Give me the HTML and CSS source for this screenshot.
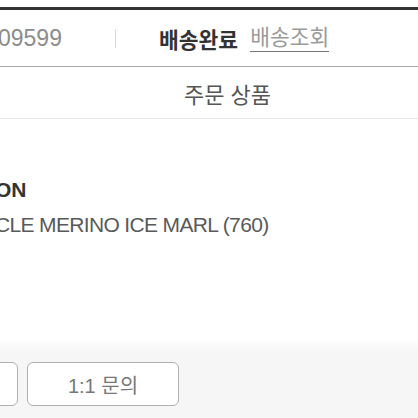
FILE: index.html
```html
<!DOCTYPE html>
<html lang="ko">
<head>
  <meta charset="UTF-8" />
  <title>주문 상세</title>
  <link rel="stylesheet" href="styles.css">
</head>
<body>

<div class="order-head">
  <div class="order-no">09599</div>
  <span class="sep"></span>
  <div class="status">
    <strong>배송완료</strong>
    <a class="track" href="#">배송조회</a>
  </div>
</div>

<div class="section-title">주문 상품</div>

<div class="product">
  <div class="brand">ON</div>
  <div class="name">CLE MERINO ICE MARL (760)</div>
</div>

<div class="actions">
  <button class="btn btn-cut"></button>
  <button class="btn">1:1 문의</button>
</div>

</body>
</html>
```

FILE: styles.css
```css
* { box-sizing: border-box; font-family: 'Liberation Sans', 'Noto Sans CJK KR', sans-serif; }
body {
  margin: 0;
  background: #fff;
  color: #333;
  overflow: hidden;
  width: 418px;
  height: 418px;
}

/* order number + delivery status */
.order-head {
  margin-top: 7px;
  border-top: 3px solid #333;
  border-bottom: 1px solid #a8a8a8;
  height: 60px;
  display: flex;
  align-items: center;
}
.order-no {
  width: 115px;
  flex-shrink: 0;
  margin-left: -2px;
  font-size: 23px;
  color: #8c8c8c;
}
.sep {
  width: 1px;
  height: 19px;
  background: #d8d8d8;
  margin-left: 2px;
}
.status {
  margin-left: 43px;
  display: flex;
  align-items: center;
  gap: 12px;
  font-size: 21.5px;
}
.status strong {
  color: #333;
  font-weight: bold;
}
.track {
  color: #9a9a9a;
  text-decoration: none;
  border-bottom: 1px solid #777;
  line-height: 26px;
}

.section-title {
  height: 52px;
  display: flex;
  align-items: center;
  justify-content: center;
  padding-left: 37px;
  border-bottom: 1px solid #e6e6e6;
  font-size: 22px;
  color: #555;
}

/* product */
.product {
  padding-top: 59px;
  margin-left: -5px;
  height: 219px;
}
.brand {
  font-size: 21px;
  font-weight: bold;
  color: #333;
  line-height: 24px;
}
.name {
  margin-top: 10px;
  font-size: 21px;
  letter-spacing: -0.65px;
  color: #595959;
  line-height: 26px;
}

/* bottom buttons */
.actions {
  background: linear-gradient(#fff, #f6f6f6 14px);
  height: 80px;
  padding-top: 24px;
  display: flex;
  gap: 9px;
}
.btn {
  height: 44px;
  background: #fff;
  border: 1px solid #b0b0b0;
  border-radius: 6px;
  font-size: 20px;
  color: #777;
  width: 152px;
  padding: 0;
}
.btn-cut {
  margin-left: -134px;
}
```
